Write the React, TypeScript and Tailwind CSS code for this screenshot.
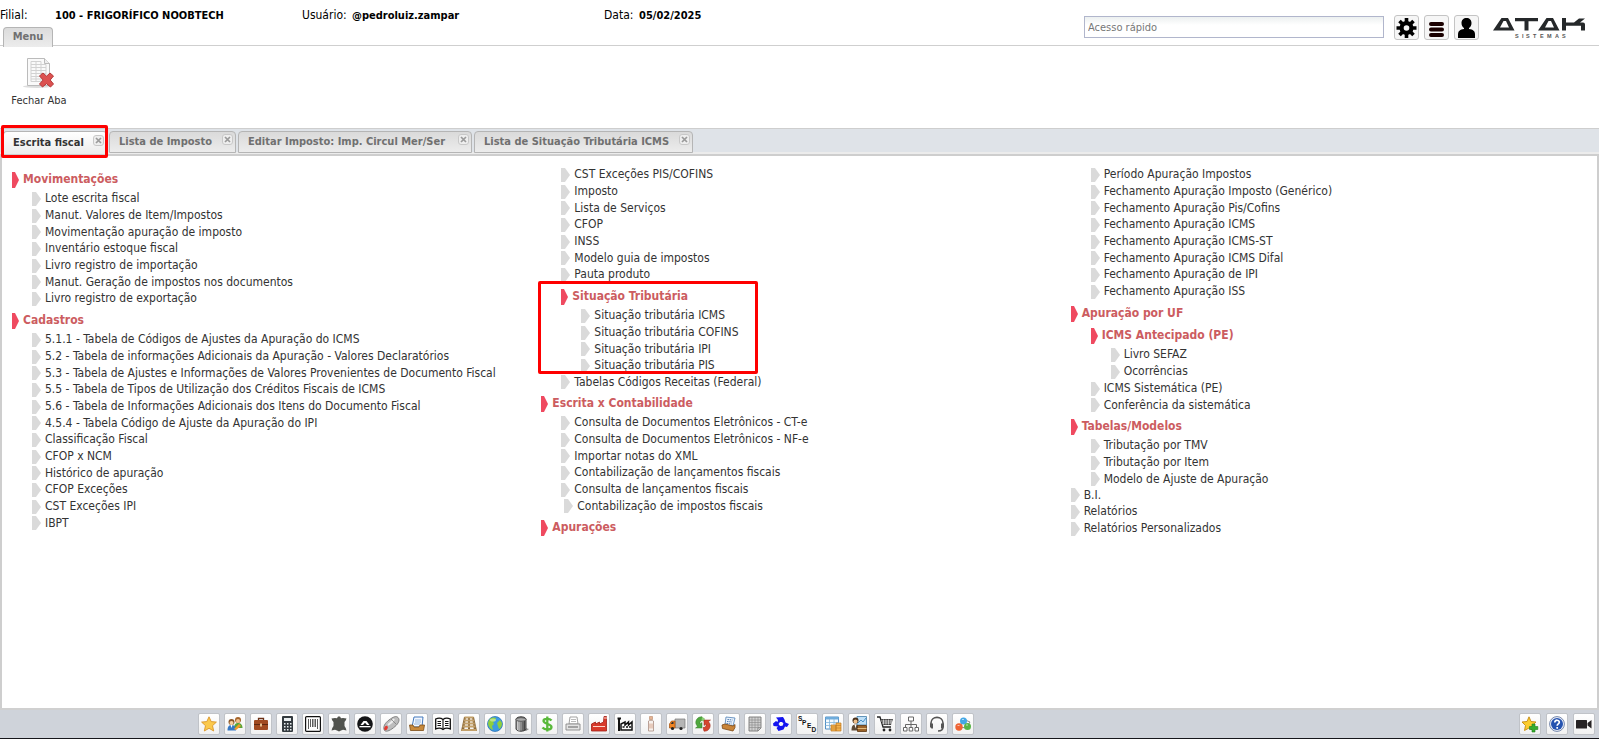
import type { ReactNode } from "react";

type Entry = { label: string; items?: Entry[]; marked?: boolean; inset?: boolean };

const leaves = (...labels: string[]): Entry[] => labels.map((label) => ({ label }));

const columns: { start: 0 | 1; items: Entry[] }[][] = [
  [
    {
      start: 0,
      items: [
        {
          label: "Movimentações",
          items: leaves(
            "Lote escrita fiscal",
            "Manut. Valores de Item/Impostos",
            "Movimentação apuração de imposto",
            "Inventário estoque fiscal",
            "Livro registro de importação",
            "Manut. Geração de impostos nos documentos",
            "Livro registro de exportação",
          ),
        },
        {
          label: "Cadastros",
          items: leaves(
            "5.1.1 - Tabela de Códigos de Ajustes da Apuração do ICMS",
            "5.2 - Tabela de informações Adicionais da Apuração - Valores Declaratórios",
            "5.3 - Tabela de Ajustes e Informações de Valores Provenientes de Documento Fiscal",
            "5.5 - Tabela de Tipos de Utilização dos Créditos Fiscais de ICMS",
            "5.6 - Tabela de Informações Adicionais dos Itens do Documento Fiscal",
            "4.5.4 - Tabela Código de Ajuste da Apuração do IPI",
            "Classificação Fiscal",
            "CFOP x NCM",
            "Histórico de apuração",
            "CFOP Exceções",
            "CST Exceções IPI",
            "IBPT",
          ),
        },
      ],
    },
  ],
  [
    {
      start: 1,
      items: [
        ...leaves(
          "CST Exceções PIS/COFINS",
          "Imposto",
          "Lista de Serviços",
          "CFOP",
          "INSS",
          "Modelo guia de impostos",
          "Pauta produto",
        ),
        {
          label: "Situação Tributária",
          marked: true,
          items: leaves(
            "Situação tributária ICMS",
            "Situação tributária COFINS",
            "Situação tributária IPI",
            "Situação tributária PIS",
          ),
        },
        { label: "Tabelas Códigos Receitas (Federal)" },
      ],
    },
    {
      start: 0,
      items: [
        {
          label: "Escrita x Contabilidade",
          items: [
            ...leaves(
              "Consulta de Documentos Eletrônicos - CT-e",
              "Consulta de Documentos Eletrônicos - NF-e",
              "Importar notas do XML",
              "Contabilização de lançamentos fiscais",
              "Consulta de lançamentos fiscais",
            ),
            { label: "Contabilização de impostos fiscais", inset: true },
          ],
        },
        { label: "Apurações", items: [] },
      ],
    },
  ],
  [
    {
      start: 1,
      items: leaves(
        "Período Apuração Impostos",
        "Fechamento Apuração Imposto (Genérico)",
        "Fechamento Apuração Pis/Cofins",
        "Fechamento Apuração ICMS",
        "Fechamento Apuração ICMS-ST",
        "Fechamento Apuração ICMS Difal",
        "Fechamento Apuração de IPI",
        "Fechamento Apuração ISS",
      ),
    },
    {
      start: 0,
      items: [
        {
          label: "Apuração por UF",
          items: [
            { label: "ICMS Antecipado (PE)", items: leaves("Livro SEFAZ", "Ocorrências") },
            ...leaves("ICMS Sistemática (PE)", "Conferência da sistemática"),
          ],
        },
        {
          label: "Tabelas/Modelos",
          items: leaves("Tributação por TMV", "Tributação por Item", "Modelo de Ajuste de Apuração"),
        },
        ...leaves("B.I.", "Relatórios", "Relatórios Personalizados"),
      ],
    },
  ],
];

function MenuEntry({ entry }: { entry: Entry }) {
  if (!entry.items) {
    return (
      <li className={`flex h-[17px] items-center nth-[3n]:h-4 ${entry.inset ? "pl-[3px]" : ""}`}>
        <svg className="mr-1 h-[14px] w-[9px] shrink-0" viewBox="0 0 9 14" aria-hidden="true">
          <path d="M0 0h4l5 7-5 7H0z" fill="#dadada" />
        </svg>
        <a href="#" className="leading-[17px] whitespace-nowrap text-[#333]">
          {entry.label}
        </a>
      </li>
    );
  }
  return (
    <li className="relative">
      <h2 className="mt-[5px] mb-0.5 flex h-[17px] items-center leading-[17px] font-bold whitespace-nowrap text-[#cc5c60]">
        <svg className="mr-1 h-4 w-[7px] shrink-0" viewBox="0 0 7 16" aria-hidden="true">
          <path d="M0 0h3l4 8-4 8H0z" fill="#ef4a60" />
        </svg>
        {entry.label}
      </h2>
      {entry.items.length > 0 && (
        <ul className="pl-5">
          {entry.items.map((item) => (
            <MenuEntry key={item.label} entry={item} />
          ))}
        </ul>
      )}
      {entry.marked && (
        <div className="pointer-events-none absolute -top-[7px] bottom-0 -left-[23px] w-[220px] rounded-xs border-3 border-[#fe0000]" />
      )}
    </li>
  );
}

function CloseButton({ label }: { label: string }) {
  return (
    <button type="button" aria-label={`Fechar ${label}`} className="mb-1.5">
      <svg className="size-[11px]" viewBox="0 0 11 11">
        <rect x=".5" y=".5" width="10" height="10" rx="2.5" fill="#eee" stroke="#c8c8c8" />
        <path d="M3 3l5 5M8 3l-5 5" stroke="#9a9a9a" strokeWidth="1.700" />
      </svg>
    </button>
  );
}

const tabs = [
  { label: "Escrita fiscal", width: "w-[104px]", active: true },
  { label: "Lista de Imposto", width: "w-[127px]" },
  { label: "Editar Imposto: Imp. Circul Mer/Ser", width: "w-[234px]" },
  { label: "Lista de Situação Tributária ICMS", width: "w-[219px]" },
];

const shortcuts: [string, ReactNode][] = [
  ["Favoritos", <path d="M8 .8l2.200 4.800 5.200.5-3.900 3.600 1.200 5.300L8 12.300 3.300 15l1.200-5.300L.6 6.100l5.200-.5z" fill="#fbc94c" stroke="#d9952a" strokeWidth=".9" />],
  ["Usuários", <><circle cx="11" cy="4" r="3" fill="#a5652c" /><circle cx="11" cy="5" r="2" fill="#f2c08c" /><path d="M7 12c0-4 2-5 4-5s4.500 1 4.500 5z" fill="#58a63a" /><circle cx="4.500" cy="6" r="3" fill="#8a5527" /><circle cx="4.500" cy="7" r="2" fill="#f7d0a2" /><path d="M.5 14.500c0-4 1.500-5.500 4-5.500S9 10.500 9 14.500z" fill="#3678c4" /><path d="M3.500 9l1 3 1-3z" fill="#fff" /><path d="M7 13l5-5 2 2-5 4z" fill="#f39a28" /></>],
  ["Pasta", <><path d="M5.500 4V2.500h5V4" fill="none" stroke="#6b2f14" strokeWidth="1.300" /><rect x="1" y="4" width="14" height="10" rx="1" fill="#a14b22" /><path d="M1 8h14v1H1z" fill="#5f2810" /><rect x="7" y="7.500" width="2" height="3" fill="#e7c08e" /></>],
  ["Calculadora", <><rect x="3" y="0" width="11" height="16" rx="1" fill="#333a3f" /><rect x="5" y="2" width="7" height="3" fill="#e9eef0" /><path d="M5 7h1.500v1.500H5zM8 7h1.500v1.500H8zM11 7h1.500v1.500H11zM5 10h1.500v1.500H5zM8 10h1.500v1.500H8zM11 10h1.500v1.500H11zM5 13h1.500v1.500H5zM8 13h1.500v1.500H8zM11 13h1.500v1.500H11z" fill="#e9eef0" /></>],
  ["Código de barras", <><rect x=".6" y=".6" width="14.800" height="14.800" rx="1" fill="#fff" stroke="#111" strokeWidth="1.200" /><path d="M3.500 3v10M5.500 3v8M7.500 3v8M9 3v8M10.500 3v8M12.500 3v10" stroke="#333" strokeWidth=".8" /></>],
  ["Couro", <path d="M.5 2.500L4 2l2 .3L7 .5h2l1 1.800 2-.3 3.500.5-.8 2L13.500 6v4l1.200 2 .8 2.500-3.500-.7-2 .7-2 1-2-1-2-.7-3.500.7.8-2.500L2.500 10V6L1.300 4.500z" fill="#51534e" />],
  ["Atak", <><circle cx="8" cy="8" r="7.800" fill="#131416" /><path d="M3.500 9L6.500 5h3l3 4H10L8 6.800 6 9z" fill="#fff" /><path d="M2.500 10h11v1.300h-11z" fill="#fff" /></>],
  ["Mouse", <><path d="M1.500 14.500C-.5 11 2 7 6 4s7-4.500 9-2.500 1 5.500-3 9-8.500 6-10.500 4z" fill="#bdbdbd" stroke="#777" strokeWidth=".9" /><path d="M5 9c3-2 5-4 6-6" stroke="#eee" strokeWidth="2" fill="none" /><path d="M8 3l5 5" stroke="#777" strokeWidth=".7" /><ellipse cx="3" cy="12" rx="1.600" ry="2.300" transform="rotate(35 3 12)" fill="#e33a32" /></>],
  ["Caixa de entrada", <><path d="M5 1h9l-1 10H3z" fill="#f4f8ff" stroke="#4378bd" strokeWidth="1" /><path d="M6 4h6M6 6h6M5 8h6" stroke="#7fa6d8" strokeWidth=".8" /><path d="M.5 9H4l1 2h5l1-2h4.500l-1 5.500H1.500z" fill="#c88a3d" stroke="#7c4c16" strokeWidth=".8" /></>],
  ["Livro", <><path d="M.7 3C3 2 6 2 8 3.500 10 2 13 2 15.300 3v10C13 12 10 12 8 13.500 6 12 3 12 .7 13z" fill="#fff" stroke="#111" strokeWidth="1.300" /><path d="M8 3.500v10M2.500 5.500h3.500M2.500 7.500h3.500M2.500 9.500h3.500M10 5.500h3.500M10 7.500h3.500M10 9.500h3.500" stroke="#111" strokeWidth="1.100" /></>],
  ["Palete", <><path d="M3 1h2L3 15H0zM11 1h2l3 14h-3zM7 1h2v14H7z" fill="#8d6b3c" /><path d="M3.500 1.500h9M3 4.500h10M2.300 7.500h11.400M1.500 10.500h13M.3 14h15.400" stroke="#c2a06a" strokeWidth="1.900" /></>],
  ["Mundo", <><circle cx="8" cy="8" r="7.500" fill="#3d9be2" stroke="#2469ac" strokeWidth=".7" /><path d="M2 4c2-3 5-3 7-2L8 5 6 6l1 2-2 2 1 4C3 13 1 10 1 7zM10 7l3-3 2 3c0 3-1 5-3 6l-1-3z" fill="#8fcf3c" /><ellipse cx="6" cy="4" rx="3" ry="1.500" fill="#fff" opacity=".4" /></>],
  ["Tanque", <><path d="M12 12l4 1-3 2H4z" fill="#4a4a4a" opacity=".6" /><path d="M3 3c1-3 9-3 10 0v10c-1 3-9 3-10 0z" fill="#8d8d8d" stroke="#333" strokeWidth=".9" /><path d="M4.500 5v9M6 5.500V15" stroke="#d4d4d4" strokeWidth=".9" /><path d="M10 5.500V15M11.500 5v9" stroke="#444" strokeWidth="1" /><ellipse cx="8" cy="3.500" rx="5" ry="1.800" fill="#aaa" stroke="#444" strokeWidth=".7" /></>],
  ["Financeiro", <path d="M12.500 4.500C11 2.500 4.500 2 4.500 5s8 2.500 8 6-7 3-9 .5M8.300.5v15" fill="none" stroke="#58b83a" strokeWidth="2.300" />],
  ["Impressora", <><path d="M4 8l1-7h7l1 7z" fill="#fff" stroke="#999" strokeWidth=".9" /><path d="M6 3.500h5M6 5.500h5" stroke="#aaa" strokeWidth=".8" /><path d="M1 8h14v6H1z" fill="#e3e3e3" stroke="#888" strokeWidth=".9" /><path d="M3 11h10" stroke="#777" strokeWidth="1.200" /></>],
  ["Indústria", <><path d="M.5 15V8l4-2v2l4-2v2l4-2 .5-5.500h2.500V15z" fill="#d93a2b" stroke="#a01f17" strokeWidth=".8" /><path d="M13 2h3M2 10.500h12" stroke="#ffd5c9" strokeWidth="1" /></>],
  ["Fábrica", <><path d="M2 15V2M.5 2.500h3.500" stroke="#111" strokeWidth="2" /><path d="M4 14V8l4-2v3l3.500-3v3L15 6v8z" fill="#fff" stroke="#111" strokeWidth="1.500" /><path d="M5.500 11h2M9 11h2M12 11h2" stroke="#111" strokeWidth="1.500" /></>],
  ["Frasco", <><path d="M6.500.5h3v3h-3z" fill="#e4b394" stroke="#b98868" strokeWidth=".6" /><path d="M5.500 5c0-1 5-1 5 0v10h-5z" fill="#f7f1ed" stroke="#a98d80" strokeWidth=".8" /><path d="M6 7.500h4v5H6z" fill="#e6cabb" /></>],
  ["Caminhão", <><path d="M6 3h10v9H6z" fill="#b5b5b5" stroke="#777" strokeWidth=".7" /><path d="M.5 12V8l2-3H6v7z" fill="#f08524" stroke="#a44f0c" strokeWidth=".7" /><path d="M1.800 8l1.200-2h1.500v2z" fill="#333" /><circle cx="3.500" cy="12.500" r="1.600" fill="#222" /><circle cx="12" cy="12.500" r="1.600" fill="#222" /></>],
  ["Atualizar", <><path d="M7 .8C3 .5 0 4 1 8l1.500 2.500L.5 12h6.500V6.500L5 8C4.500 5.500 6 4.500 8 4.500z" fill="#4fa83e" stroke="#347a28" strokeWidth=".5" /><path d="M7 .8l3 2-1.500 3-2-1.300z" fill="#8ccc74" /><path d="M9 15.200c4 .3 7-3 6-7.200l-1.500-2.500 2-1.500H9v5.500L11 8c.5 2.500-1 3.500-3 3.500z" fill="#d6462f" stroke="#95281a" strokeWidth=".5" /></>],
  ["Documentos", <><path d="M5 1l9 1-2 8-8-1z" fill="#eaf3fd" stroke="#4e7fb5" strokeWidth=".8" /><path d="M6.500 3.500l5 .5M6 5.500l5 .5M5.500 7.500l5 .5" stroke="#3e6da5" strokeWidth=".9" strokeDasharray="1.500 .7" /><path d="M1 9l3-1 8 2 2-1.500v3L12 15 1.500 12.500z" fill="#c98438" stroke="#7b4814" strokeWidth=".8" /></>],
  ["Planilha", <><path d="M2 1h12v11l-3 3H2z" fill="#d0d0d0" stroke="#777" strokeWidth=".9" /><path d="M2 4h12M2 6.500h12M2 9h12M2 11.500h11M5 1v14M8 1v14M11 1v14" stroke="#888" strokeWidth=".6" /><path d="M14 12h-3v3z" fill="#eee" stroke="#777" strokeWidth=".7" /></>],
  ["Integração", <path d="M3 1.500L10 1l1.500 2.500 1 3L16 8l-2 3-2-.5-1.500 3L5.500 15l-2-3L5 10.500.5 10 0 7.500 3 5l1.500 1L5 4zM7 6L5.500 8 7 10l2.500-.3 1-2.200L9 6z" fill="#1414f0" fillRule="evenodd" />],
  ["SPED", <g fill="#111" fontFamily="Liberation Sans, sans-serif" fontWeight="700" fontSize="6.500"><text x="-1" y="5">S</text><text x="3" y="9">P</text><text x="8" y="12">E</text><text x="12.500" y="15.500">D</text></g>],
  ["Tabela de custos", <><path d="M.5 1h13v12H.5z" fill="#f4faff" stroke="#3f82bd" strokeWidth=".9" /><path d="M.5 1h13v2.500H.5z" fill="#6eacdc" /><path d="M.5 6.500h13M.5 9.500h13M4.500 3v10M9 3v10" stroke="#83b5dc" strokeWidth=".8" /><path d="M6 9h5v6H6zM11 7h5v8h-5z" fill="#f4b14c" stroke="#bd7923" strokeWidth=".7" /><path d="M6 11h5M6 13h5M11 9.500h5M11 12h5" stroke="#bd7923" strokeWidth=".6" /></>],
  ["Representante", <><path d="M6 .5h9.500V9H6z" fill="#bfe0f7" stroke="#447da9" strokeWidth=".8" /><path d="M7 7l3-3 2 2 3-4" stroke="#4b91c7" fill="none" /><circle cx="4.500" cy="4.500" r="3" fill="#49301a" /><circle cx="4.500" cy="5.500" r="2" fill="#efbf8a" /><path d="M.5 14.500c0-4 1-6 4-6s4 2 4 6z" fill="#5e4a36" /><path d="M3.500 8.500l1 4 1-4z" fill="#fff" /><path d="M6.500 9.500h9v6h-9z" fill="#9a6228" stroke="#5a3510" strokeWidth=".8" /><path d="M6.500 12.500h9" stroke="#e3bb7d" /></>],
  ["Compras", <><path d="M0 1h3l3 10h8" fill="none" stroke="#222" strokeWidth="1.300" /><path d="M4 3h12l-2 6H5.500z" fill="#444" /><path d="M6.500 3.500v5M9 3.500v5M11.500 3.500v5M14 3.500v4M4 5h11M5 7h10" stroke="#fff" strokeWidth=".6" /><circle cx="7" cy="14" r="1.400" fill="#222" /><circle cx="13" cy="14" r="1.400" fill="#222" /></>],
  ["Organograma", <g fill="#fff" stroke="#666" strokeWidth="1"><path d="M8 5v3.500M2.500 11V8.500h11V11M8 8.500V11" fill="none" /><path d="M5.500 1h5v4h-5z" /><path d="M.5 11.500h3.500V15H.5zM6.200 11.500h3.500V15H6.200zM12 11.500h3.500V15H12z" /></g>],
  ["Suporte", <><path d="M2 9V7c0-7.500 12-7.500 12 0v2M14 11c0 3-2 4-5 4" fill="none" stroke="#555" strokeWidth="1.600" /><path d="M1 7.500h3v5H2.500L1 11zM15 7.500h-3v5h1.500L15 11z" fill="#555" /></>],
  ["Módulos", <><path d="M8 3l7 3-4 6-6-1z" fill="none" stroke="#888" strokeWidth="1" /><circle cx="8.500" cy="5" r="3.500" fill="#43a7e5" /><circle cx="12.500" cy="10.500" r="3.500" fill="#58b446" /><circle cx="4" cy="11" r="3.700" fill="#ef6435" /><path d="M7 3.500h2M2.500 9.500h2M11 9h2" stroke="#fff" opacity=".6" /></>],
];

const utilities: [string, ReactNode][] = [
  ["Adicionar favorito", <><path d="M7 .8l2 4.700 5 .5-3.700 3.500 1 5L7 12l-4.500 2.500 1-5L0 6l5-.5z" fill="#fbcd2e" stroke="#c48a12" strokeWidth=".9" /><path d="M10 8h3v2.500h2.800v3H13V16h-3v-2.500H7.500v-3H10z" fill="#35ad2f" stroke="#1f7d1c" strokeWidth=".6" /></>],
  ["Ajuda", <><circle cx="8" cy="8" r="7.400" fill="#eef2fa" stroke="#7386ac" strokeWidth="1" /><circle cx="8" cy="8" r="6" fill="#2553b0" /><path d="M5.800 6.500c0-3.200 4.700-2.800 4.500-.2C10.200 8 8.200 7.800 8.200 9.800M8.200 11v1.800" fill="none" stroke="#fff" strokeWidth="1.700" /></>],
  ["Vídeo", <><rect x="0" y="4" width="11" height="8.500" rx=".5" fill="#262324" /><path d="M11.500 7L15.500 4v8.500l-4-3z" fill="#262324" /></>],
];

function IconButton({ label, children }: { label: string; children: ReactNode }) {
  return (
    <button
      type="button"
      aria-label={label}
      className="flex size-[22px] shrink-0 items-center justify-center rounded-xs border border-[#c0c3c8] bg-linear-to-b from-white to-[#f1f1f1]"
    >
      <svg className="size-4 overflow-visible" viewBox="0 0 16 16">
        {children}
      </svg>
    </button>
  );
}

function HeaderButton({ label, children }: { label: string; children: ReactNode }) {
  return (
    <button
      type="button"
      aria-label={label}
      className="flex size-[25px] shrink-0 items-center justify-center rounded-[3px] border border-[#c4c4c4] bg-[#f6f6f6]"
    >
      <svg className="size-[21px]" viewBox="0 0 21 21">
        {children}
      </svg>
    </button>
  );
}

function Info({ term, value, termWidth }: { term: string; value: string; termWidth: string }) {
  return (
    <div className="flex w-[302px] items-baseline">
      <dt className={termWidth}>{term}</dt>
      <dd className="text-[11px] font-bold whitespace-nowrap">{value}</dd>
    </div>
  );
}

export default function App() {
  return (
    <div className="flex min-h-screen flex-col bg-white font-['DejaVu_Sans_Condensed','DejaVu_Sans',sans-serif] text-[12px] text-black">
      <header className="flex h-[46px] justify-between border-b border-[#cfcfcf]">
        <div className="flex flex-col">
          <dl className="flex pt-[7px] leading-4">
            <Info term="Filial:" value="100 - FRIGORÍFICO NOOBTECH" termWidth="w-[55px]" />
            <Info term="Usuário:" value="@pedroluiz.zampar" termWidth="w-[50px]" />
            <Info term="Data:" value="05/02/2025" termWidth="w-[35px]" />
          </dl>
          <button
            type="button"
            className="mt-[3px] ml-[3px] h-5 w-[50px] shrink-0 rounded-t-[4px] border border-b-0 border-[#b5b5b5] bg-linear-to-b from-[#dcdcdc] to-[#ececec] text-[11px] font-bold text-[#707070]"
          >
            Menu
          </button>
        </div>
        <div className="flex items-start gap-[5px] pt-[15px] pr-3">
          <input
            type="text"
            aria-label="Acesso rápido"
            placeholder="Acesso rápido"
            className="mt-px mr-[5px] h-[22px] w-[300px] border border-[#b1b6cc] bg-linear-to-b from-[#ecf0f0] to-white to-40% px-[3px] text-[11px] placeholder:text-[#777]"
          />
          <HeaderButton label="Configurações">
            <g transform="translate(10.500 11)">
              <path d="M0-10v20M-10 0h20M-7-7L7 7M7-7L-7 7" stroke="#000" strokeWidth="3.600" />
              <circle r="7" />
              <circle r="2.800" fill="#f6f6f6" />
            </g>
          </HeaderButton>
          <HeaderButton label="Menu principal">
            <path d="M5 5h11q2 0 2 2t-2 2H5q-2 0-2-2t2-2zM5 10.500h11q2 0 2 2t-2 2H5q-2 0-2-2t2-2zM5 16h11q2 0 2 2t-2 2H5q-2 0-2-2t2-2z" fill="#1a0000" />
          </HeaderButton>
          <HeaderButton label="Perfil">
            <path d="M10.500 1c3 0 5 2 5 5 0 2.500-1 4-2.500 5v1c4 .5 6 2 6 5.500V21H2v-3.500C2 14 4 12.500 8 12v-1C6.500 10 5.500 8.500 5.500 6c0-3 2-5 5-5z" />
          </HeaderButton>
          <svg className="mt-[3px] ml-[9px] h-5 w-[94px]" viewBox="0 0 94 20" role="img" aria-label="Atak Sistemas">
            <g fill="#25282a">
              <path d="M0 12.500L8.500 0H15l6.500 12.500zM7 9.500h9L13 3h-2.500z" fillRule="evenodd" />
              <path d="M22 0h23v3.200h-9.500v9.300h-4V3.200H22z" />
              <path d="M45 12.500L53.500 0H60l6.500 12.500zM52 9.500h9L58 3h-2.500z" fillRule="evenodd" />
              <path d="M69 0h4v4.500h8L86 .5h6l-5 4h3q2 0 2 2v6h-4V7.800H73v4.700h-4z" />
            </g>
            <text
              x="22 29 33 40 47 54 62 69"
              y="19.500"
              fontSize="5.500"
              fontWeight="700"
              fontFamily="Liberation Sans, sans-serif"
              fill="#555"
            >
              SISTEMAS
            </text>
          </svg>
        </div>
      </header>

      <div className="h-[82px] px-[7px] pt-[11px]">
        <button type="button" className="flex w-16 flex-col items-center gap-1 text-[11px] leading-4 text-[#333]">
          <svg className="size-8" viewBox="0 0 32 32" aria-hidden="true">
            <ellipse cx="14" cy="29.500" rx="14" ry="1.500" fill="#ddd" />
            <path d="M4.500 1.500h17l5 5v22h-22z" fill="#fafafa" stroke="#bbb" />
            <path d="M21.500 1.500v5h5" fill="#eee" stroke="#bbb" />
            <path d="M8 4.500h10v3h5v17H8zM8 7.500h10M8 10.500h15M8 13.500h15M8 16.500h15M8 19.500h15M8 22h15M13 4.500v20M18 7.500v17" fill="none" stroke="#d2d2d2" />
            <path d="M18 17.500l2-1.500 3.500 3.200L27 16l3.500 3-3.300 4 3.300 4-3 3-4-3.300L19.500 30l-3-3 3.600-4-3.600-4z" fill="#dc5150" stroke="#b53a3a" />
          </svg>
          Fechar Aba
        </button>
      </div>

      <nav className="flex h-[28px] items-start gap-[2px] border-t border-b-2 border-[#cecece] bg-[#dfe3e8] pl-[3px] shadow-[inset_0_-2px_0_#ececec]">
        {tabs.map((tab) => (
          <div
            key={tab.label}
            className={`relative mt-[2px] flex ${tab.width} items-center justify-between rounded-t-[4px] border border-[#b5b5b5] pr-[2px] pl-[9px] text-[11px] font-bold ${
              tab.active
                ? "h-[23px] border-b-0 bg-linear-to-b from-white to-[#ececec] text-[#333]"
                : "h-[22px] bg-linear-to-b from-[#dadada] to-[#ececec] text-[#707070]"
            }`}
          >
            <a href="#" className="whitespace-nowrap">
              {tab.label}
            </a>
            <CloseButton label={tab.label} />
            {tab.active && (
              <div className="pointer-events-none absolute -top-[7px] -right-[2px] -bottom-[4px] -left-[3px] rounded-xs border-3 border-[#fe0000]" />
            )}
          </div>
        ))}
      </nav>

      <main className="grid grow grid-cols-3 gap-x-[3px] border-x-2 border-[#cecece] pt-[10px] pl-[10px]">
        {columns.map((groups, column) => (
          <div key={column}>
            {groups.map((group, index) => (
              <ul key={index} className={group.start === 1 ? "pl-5" : ""}>
                {group.items.map((item) => (
                  <MenuEntry key={item.label} entry={item} />
                ))}
              </ul>
            ))}
          </div>
        ))}
      </main>

      <footer className="flex h-[31px] justify-between border-t-2 border-b border-t-[#d0d0d0] border-b-[#15151a] bg-[#cfd3da] pt-[3px] pr-1 pl-[198px]">
        <div className="flex gap-1">
          {shortcuts.map(([label, icon]) => (
            <IconButton key={label} label={label}>
              {icon}
            </IconButton>
          ))}
        </div>
        <div className="flex gap-[5px]">
          {utilities.map(([label, icon]) => (
            <IconButton key={label} label={label}>
              {icon}
            </IconButton>
          ))}
        </div>
      </footer>
    </div>
  );
}
